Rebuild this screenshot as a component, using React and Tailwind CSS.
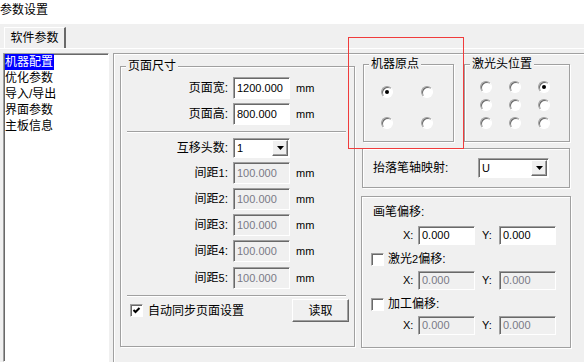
import React from 'react';

const sunken =
  'border border-t-[#a0a0a0] border-l-[#a0a0a0] border-r-white border-b-white shadow-[inset_1px_1px_0_#696969]';
const raised =
  'border border-t-white border-l-white border-r-[#696969] border-b-[#696969] shadow-[inset_-1px_-1px_0_#a0a0a0]';
const etched = 'border border-[#a0a0a0] shadow-[inset_1px_1px_0_#fff,1px_1px_0_#fff]';

const Group = ({ title, className = '', children }) => (
  <div className={`relative ${etched} ${className}`}>
    {title && (
      <span className="absolute -top-[9px] left-[5px] bg-[#f0f0f0] px-[2px] text-[12px] leading-[16px]">
        {title}
      </span>
    )}
    {children}
  </div>
);

const Field = ({ value, disabled, className = 'w-[57px] h-[22px]' }) => (
  <div
    className={`flex items-center pl-[3px] text-[11px] ${sunken} ${className} ${
      disabled ? 'bg-[#f0f0f0] text-[#7a7a86]' : 'bg-white text-black'
    }`}
  >
    {value}
  </div>
);

const Combo = ({ value, className = '' }) => (
  <div className={`flex items-stretch bg-white ${sunken} ${className}`}>
    <span className="flex flex-1 items-center pl-[3px] text-[11px]">{value}</span>
    <span className={`m-[1px] flex w-[16px] items-center justify-center bg-[#f0f0f0] ${raised}`}>
      <svg width="7" height="4" viewBox="0 0 7 4">
        <polygon points="0,0 7,0 3.5,4" fill="#000" />
      </svg>
    </span>
  </div>
);

const Checkbox = ({ checked }) => (
  <span className={`flex h-[13px] w-[13px] shrink-0 items-center justify-center bg-white ${sunken}`}>
    {checked && (
      <svg width="9" height="9" viewBox="0 0 9 9">
        <polyline points="1.5,4 3.5,6 7.5,2" fill="none" stroke="#000" strokeWidth="2" />
      </svg>
    )}
  </span>
);

const Radio = ({ checked }) => (
  <span className="flex h-[12px] w-[12px] items-center justify-center rounded-full border border-t-[#a0a0a0] border-l-[#a0a0a0] border-r-white border-b-white bg-white shadow-[inset_1px_1px_0_#696969]">
    {checked && <span className="h-[4px] w-[4px] rounded-full bg-black" />}
  </span>
);

const Separator = () => <div className="ml-[6px] mr-[8px] h-[2px] border-t border-t-[#a0a0a0] border-b border-b-white" />;

const Row = ({ label, num, value, disabled, unit = true, mt = 'mt-[4px]' }) => (
  <div className={`flex items-center ${mt}`}>
    <span className="w-[107px] text-right text-[12px]">
      {label}
      {num && <span className="text-[11px]">{num}</span>}:
    </span>
    <Field value={value} disabled={disabled} className="ml-[5px] h-[22px] w-[57px]" />
    {unit && <span className="ml-[6px] text-[11px]">mm</span>}
  </div>
);

const XY = ({ x, y, disabled, mt }) => (
  <div className={`flex items-center pl-[41px] ${mt}`}>
    <span className="w-[15px] text-[11px]">X:</span>
    <Field value={x} disabled={disabled} className="h-[19px] w-[57px]" />
    <span className="ml-[7px] w-[17px] text-[11px]">Y:</span>
    <Field value={y} disabled={disabled} className="h-[19px] w-[57px]" />
  </div>
);

const menu = ['机器配置', '优化参数', '导入/导出', '界面参数', '主板信息'];

const App = () => {
  return (
    <div className="relative h-[362px] w-[584px] overflow-hidden bg-[#f0f0f0] font-['Liberation_Sans','Noto_Sans_CJK_SC',sans-serif] text-black">
      <div className="h-[24px] bg-white pt-[2px] text-[12px] leading-[16px]">参数设置</div>

      <div className="flex h-[24px] items-end">
        <div className={`ml-[4px] flex h-[21px] w-[62px] items-center justify-center border-l border-t border-l-white border-t-white border-r-2 border-r-[#696969] text-[12px]`}>
          软件参数
        </div>
      </div>

      <div className="flex h-[314px] border-t border-t-white pt-[4px]">
        <div className={`ml-[3px] w-[106px] bg-white text-[12px] leading-[16px] ${sunken}`}>
          {menu.map((m, i) => (
            <div key={m} className="pl-[1px]">
              <span className={i === 0 ? 'inline-block bg-[#0000ff] pr-[1px] text-white' : 'inline-block'}>{m}</span>
            </div>
          ))}
        </div>

        <div className="ml-[4px] flex flex-1 border-l border-t border-[#a0a0a0] pl-[6px] pt-[10px] shadow-[inset_1px_1px_0_#fff]">
          <Group title="页面尺寸" className="mt-[2px] h-[281px] w-[235px] shrink-0">
            <div className="flex flex-col pt-[10px]">
              <Row label="页面宽" value="1200.000" mt="" />
              <Row label="页面高" value="800.000" />
              <div className="mt-[6px]">
                <Separator />
              </div>
              <div className="mt-[5px] flex items-center">
                <span className="w-[107px] text-right text-[12px]">互移头数:</span>
                <Combo value="1" className="ml-[5px] h-[20px] w-[57px]" />
              </div>
              <Row label="间距" num="1" value="100.000" disabled />
              <Row label="间距" num="2" value="100.000" disabled />
              <Row label="间距" num="3" value="100.000" disabled />
              <Row label="间距" num="4" value="100.000" disabled />
              <Row label="间距" num="5" value="100.000" disabled mt="mt-[5px]" />
              <div className="mt-[6px]">
                <Separator />
              </div>
              <div className="mt-[2px] flex h-[23px] items-center pl-[9px]">
                <Checkbox checked />
                <span className="ml-[5px] text-[12px]">自动同步页面设置</span>
                <button className={`ml-auto mr-[5px] h-[23px] w-[57px] bg-[#f0f0f0] text-[12px] ${raised}`}>读取</button>
              </div>
            </div>
          </Group>

          <div className="ml-[7px] flex w-[208px] shrink-0 flex-col">
            <div className="flex">
              <Group title="机器原点" className="ml-[1px] h-[78px] w-[91px]">
                <div className="grid grid-cols-[12px_12px] gap-x-[28px] gap-y-[19px] pl-[17px] pt-[21px]">
                  <Radio checked />
                  <Radio />
                  <Radio />
                  <Radio />
                </div>
              </Group>
              <Group title="激光头位置" className="ml-[10px] h-[78px] w-[106px]">
                <div className="grid grid-cols-[12px_12px_12px] gap-x-[17px] gap-y-[6px] pl-[15px] pt-[16px]">
                  <Radio />
                  <Radio />
                  <Radio checked />
                  <Radio />
                  <Radio />
                  <Radio />
                  <Radio />
                  <Radio />
                  <Radio />
                </div>
              </Group>
            </div>

            <Group className="mt-[6px] flex h-[40px] w-[208px] items-center pl-[10px]">
              <span className="w-[105px] text-[12px]">抬落笔轴映射:</span>
              <Combo value="U" className="h-[20px] w-[71px]" />
            </Group>

            <Group className="-ml-[1px] mt-[8px] h-[152px] w-[210px]">
              <div className="flex flex-col pt-[7px]">
                <div className="pl-[11px] text-[12px] leading-[16px]">画笔偏移:</div>
                <XY x="0.000" y="0.000" mt="mt-[6px]" />
                <div className="mt-[6px] flex h-[16px] items-center pl-[9px]">
                  <Checkbox />
                  <span className="ml-[4px] text-[12px]">
                    激光<span className="text-[11px]">2</span>偏移:
                  </span>
                </div>
                <XY x="0.000" y="0.000" disabled mt="mt-[4px]" />
                <div className="mt-[6px] flex h-[16px] items-center pl-[9px]">
                  <Checkbox />
                  <span className="ml-[4px] text-[12px]">加工偏移:</span>
                </div>
                <XY x="0.000" y="0.000" disabled mt="mt-[4px]" />
              </div>
            </Group>
          </div>
        </div>
      </div>

      <div className="pointer-events-none absolute left-[348px] top-[37px] h-[112px] w-[116px] border border-[#f03c3c]" />
    </div>
  );
};

export default App;
